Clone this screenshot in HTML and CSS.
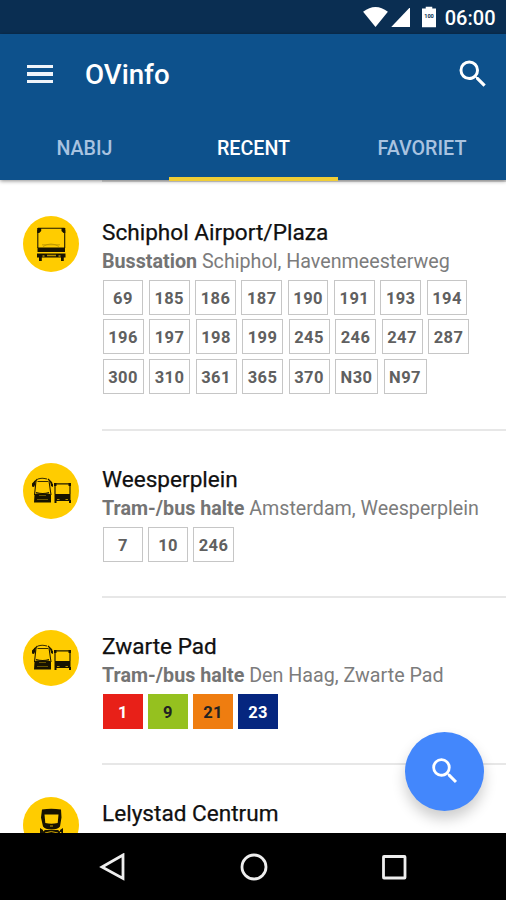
FILE: index.html
```html
<!DOCTYPE html>
<html lang="nl">
<head>
<meta charset="utf-8">
<title>OVinfo</title>
<link rel="stylesheet" href="styles.css">
</head>
<body>
<svg width="0" height="0" class="defs">
  <symbol id="search" viewBox="0 0 24 24"><path d="M15.500 14h-.79l-.28-.27A6.470 6.470 0 0 0 16 9.500 6.500 6.500 0 1 0 9.500 16c1.610 0 3.090-.59 4.230-1.570l.27.28v.79l5 4.990L20.490 19l-4.990-5zm-6 0C7.010 14 5 11.990 5 9.500S7.010 5 9.500 5 14 7.010 14 9.500 11.990 14 9.500 14z"/></symbol>
  <symbol id="tram-bus" viewBox="0 0 56 56">
    <path d="M15 16q4-1.500 9 0M14.500 18.500h10.500" fill="none" stroke="#3a3000" stroke-width="1.200"/>
    <path d="M14.500 16l-3 3M25 16l4 4" fill="none" stroke="#1d1800" stroke-width="1.200"/>
    <path d="M13 18l-1.500 14M26 18l2 14M13 29.500q7 2 13 0" fill="none" stroke="#1d1800" stroke-width="1.100"/>
    <path d="M12 17.500l-3 3v3l2 .5 1.500-3zM27 18l3 3v3l-2-1zM11.500 31.500l2-1h12l2.500 1v8H11z"/>
    <path d="M14 36.500h11M16 32.500h7" stroke="#806700" stroke-width=".8"/>
    <path d="M32 21v10M47 21v10M32 20.800h15" fill="none" stroke="#1d1800" stroke-width="1.200"/>
    <path d="M31 20h2.500v3H31zM45.500 20h2.500v3h-2.500zM31.500 31h16v7h-16zM31.500 37h2v3h-2zM46 37h2v3h-2z"/>
    <path d="M34 36.500h2.500M42.500 36.500H45" stroke="#b48f00" stroke-width="1"/>
  </symbol>
</svg>
<div class="phone">
  <div class="status">
    <svg class="wifi" viewBox="0 0 26 22"><path d="M0 5Q13-5 26 5L13 21z"/></svg>
    <svg class="signal" viewBox="0 0 20 21"><path d="M20 0v21H0z"/></svg>
    <svg class="battery" viewBox="0 0 15 22"><path d="M4 0h7v2h4v20H0V2h4z"/><text x="7.500" y="12.500" text-anchor="middle">100</text></svg>
    <span class="clock">06:00</span>
  </div>
  <header class="appbar">
    <div class="toolbar">
      <div class="menu"><i></i><i></i><i></i></div>
      <h1>OVinfo</h1>
      <svg class="search"><use href="#search"/></svg>
    </div>
    <nav class="tabs">
      <span class="tab">NABIJ</span>
      <span class="tab active">RECENT</span>
      <span class="tab">FAVORIET</span>
    </nav>
  </header>
  <main class="list">
    <section class="stop">
      <svg class="badge" viewBox="0 0 56 56">
        <path d="M14.800 14v18M41.700 14v18M15 12.200h26.500" fill="none" stroke="#1d1800" stroke-width="1.100"/>
        <path d="M14.200 12h4v3l-2 2h-2zM38.500 12h3.800v5h-1.800l-2-2zM14.500 31.500h27.500v4.500h-27.500zM14 37.500h28.500v4H14zM16 41h2.800v4H16zM38 41h2.800v4H38z"/>
        <path d="M20 30.500q8-5 16 0M19 28.800h18" fill="none" stroke="#b89300" stroke-width=".8"/>
        <path d="M19.500 40h2M35.500 40h2M24 39.500h9" stroke="#b48f00" stroke-width="1.500"/>
      </svg>
      <div class="info">
        <h2>Schiphol Airport/Plaza</h2>
        <p><b>Busstation</b> Schiphol, Havenmeesterweg</p>
        <div class="lines first"><span>69</span><span>185</span><span>186</span><span>187</span><span>190</span><span>191</span><span>193</span><span>194</span></div>
        <div class="lines wide"><span>196</span><span>197</span><span>198</span><span>199</span><span>245</span><span>246</span><span>247</span><span>287</span></div>
        <div class="lines wide"><span>300</span><span>310</span><span>361</span><span>365</span><span>370</span><span class="night">N30</span><span class="night">N97</span></div>
      </div>
    </section>
    <section class="stop">
      <svg class="badge"><use href="#tram-bus"/></svg>
      <div class="info">
        <h2>Weesperplein</h2>
        <p><b>Tram-/bus halte</b> Amsterdam, Weesperplein</p>
        <div class="lines"><span>7</span><span>10</span><span class="three">246</span></div>
      </div>
    </section>
    <section class="stop">
      <svg class="badge"><use href="#tram-bus"/></svg>
      <div class="info">
        <h2>Zwarte Pad</h2>
        <p><b>Tram-/bus halte</b> Den Haag, Zwarte Pad</p>
        <div class="lines solid"><span class="red">1</span><span class="green">9</span><span class="orange">21</span><span class="navy">23</span></div>
      </div>
    </section>
    <section class="stop">
      <svg class="badge" viewBox="0 0 56 56">
        <path fill-rule="evenodd" d="M19 12.500q9-1.500 19 0l.5 8-1.500 9q-2 3-8.500 3t-8.500-3l-2-9zM21.500 17.500l.8 8.500q6 1.500 12.400 0l.8-8.500z"/>
        <path d="M17 31l3 2v4h-3zM40 31l-3 2v4h3zM18 36l4-3h13l4 3v5H18z"/>
        <path d="M22 36q6-3 13 0M27 29h3" fill="none" stroke="#c89f00" stroke-width="1"/>
      </svg>
      <div class="info"><h2>Lelystad Centrum</h2></div>
    </section>
  </main>
  <div class="fab"><svg><use href="#search"/></svg></div>
  <footer class="navbar">
    <svg viewBox="0 0 28 28"><path d="M24 2v23.500L3 14z"/></svg>
    <svg viewBox="0 0 28 28"><circle cx="14" cy="14" r="12"/></svg>
    <svg viewBox="0 0 28 28"><rect x="3.500" y="3.500" width="21.500" height="21.500" rx=".5"/></svg>
  </footer>
</div>
</body>
</html>
```
FILE: styles.css
```css
* { box-sizing: border-box; margin: 0; padding: 0; }
body { font-family: Roboto, "Liberation Sans", sans-serif; background: #fff; }
.defs { position: absolute; }
.phone { position: relative; width: 506px; height: 900px; overflow: hidden; display: flex; flex-direction: column; }
.status { height: 34px; flex: none; background: #0a2e52; display: flex; align-items: center; justify-content: flex-end; padding-right: 10.500px; }
.status svg { fill: #fff; }
.wifi { width: 25px; height: 21px; margin-right: 3px; }
.signal { width: 19.500px; height: 20px; margin-right: 11.500px; }
.battery { width: 14px; height: 22px; margin-right: 9px; }
.battery text { fill: #0a2e52; font-size: 6px; font-weight: 700; }
.clock { color: #fff; font-size: 20px; font-weight: 500; line-height: 34px; padding-top: 2px; }
.appbar { position: relative; z-index: 1; height: 146px; flex: none; background: #0d518c; box-shadow: 0 1px 4px rgba(0,0,0,.45); }
.toolbar { height: 80px; display: flex; align-items: center; padding: 0 15px 0 27px; }
.menu { width: 26px; display: flex; flex-direction: column; gap: 4px; }
.menu i { height: 3.500px; background: #f0f4fa; }
h1 { flex: 1; margin-left: 32px; color: #fff; font-size: 27.700px; font-weight: 500; line-height: 32px; padding-top: 2px; }
.search { width: 36px; height: 36px; fill: #fff; }
.tabs { display: grid; grid-template-columns: 169px 169px 168px; height: 67px; }
.tab { height: 67px; padding: 2px 0 0 0; color: #a9c3e0; font-size: 19.700px; font-weight: 500; line-height: 65px; text-align: center; }
.active { color: #fff; border-bottom: 4px solid #f0cd36; }
.list { flex: 1; min-height: 0; overflow: hidden; background: #fff; }
.list::before { content: ""; display: block; height: 2px; margin: 0 0 1px 102px; background: #dcdcdc; }
.stop { display: flex; height: 167px; padding-left: 23px; }
.stop:first-child { height: 248px; }
.badge { width: 56px; height: 56px; flex: none; margin: 32px 23px 0 0; border-radius: 50%; background: #fc0; fill: #171300; }
.stop:first-child .badge { margin-top: 33px; }
.info { flex: 1; padding-top: 34px; border-bottom: 2px solid #e7e7e7; white-space: nowrap; }
.stop:first-child .info { padding-top: 35px; }
h2 { color: #101010; font-size: 22.600px; font-weight: 400; -webkit-text-stroke: .25px #101010; line-height: 30px; }
p { color: #7c7c7c; font-size: 19.700px; line-height: 28px; font-weight: 400; }
p b { font-weight: 700; color: #747474; }
.lines { display: flex; gap: 5px; margin: 4px 0 0 1px; }
.lines.first { gap: 5.500px; margin: 4px 0 4px 0.500px; }
.lines span { width: 40px; height: 35px; border: 1px solid #c6c6c6; color: #606060; font-size: 16.500px; font-weight: 700; line-height: 35px; text-align: center; letter-spacing: .4px; }
.lines.first span { width: 40.800px; }
.lines.wide span { width: 41px; }
.lines.wide { gap: 5.500px; margin: 5px 0 0 .5px; }
.lines.first + .wide { margin-top: 0; }
.lines .three { width: 41px; }
.lines.wide .night { width: 43px; }
.lines.solid span { border: 0; line-height: 37px; }
.lines.solid .red { background: #e82018; color: #fff; }
.lines.solid .green { background: #95c11f; color: #222; }
.lines.solid .orange { background: #ef7d10; color: #222; }
.lines.solid .navy { background: #05267f; color: #fff; }
.fab { position: absolute; z-index: 2; left: 405px; top: 731.500px; width: 79px; height: 79px; border-radius: 50%; background: #4387fc; display: flex; align-items: center; justify-content: center; box-shadow: 0 8px 14px rgba(0,0,0,.2); }
.fab svg { width: 34px; height: 34px; fill: #fff; }
.navbar { position: relative; z-index: 3; height: 67px; flex: none; background: #000; display: flex; justify-content: center; align-items: center; gap: 112.500px; padding-left: 1px; }
.navbar svg { width: 28px; height: 28px; fill: none; stroke: #eee; stroke-width: 2.800; }
```
